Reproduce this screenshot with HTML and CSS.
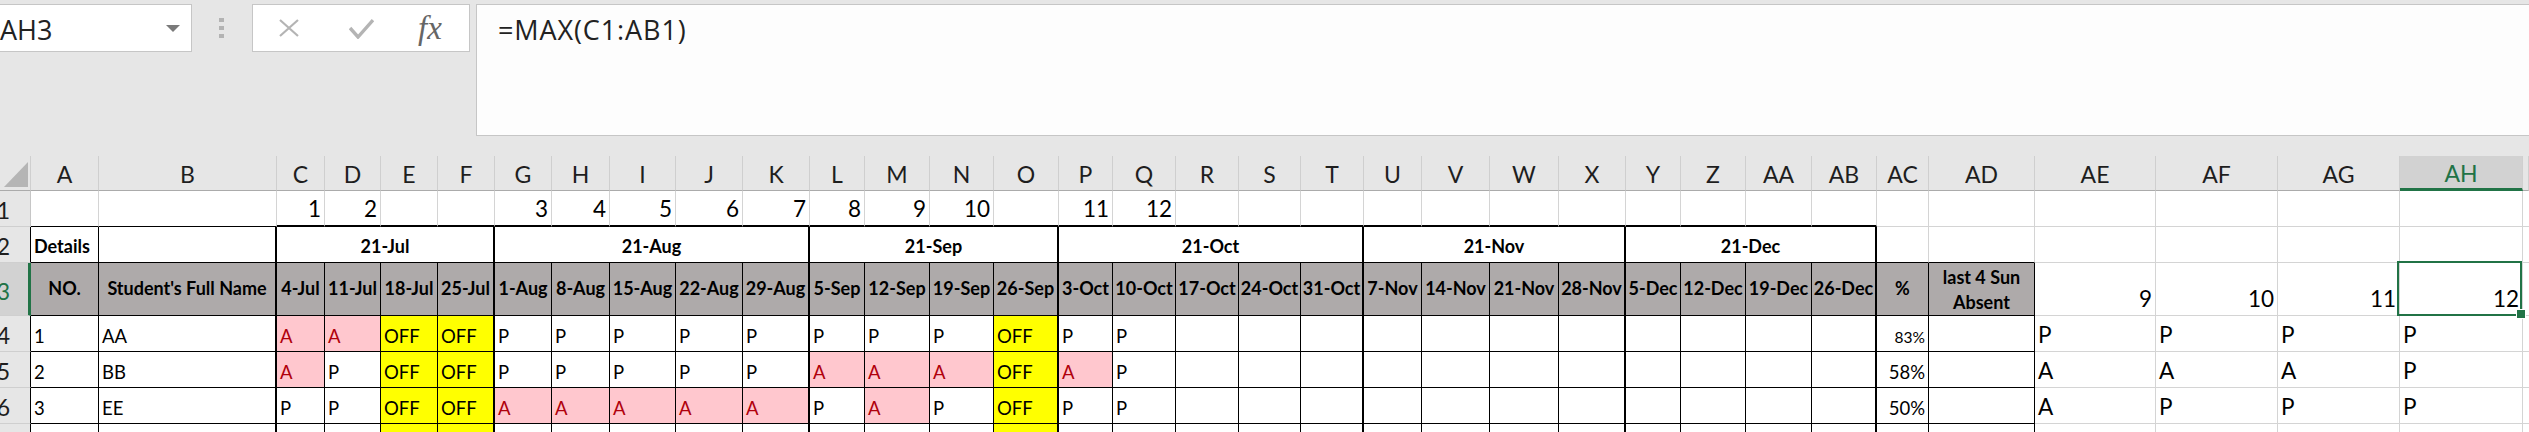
FILE: index.html
```html
<!DOCTYPE html>
<html lang="en">
<head>
<meta charset="utf-8">
<title>Attendance sheet</title>
<link rel="stylesheet" href="styles.css">
</head>
<body>
<div class="fbar">
  <div class="namebox"><span class="nbtext">AH3</span><svg class="dd" width="14" height="7" viewBox="0 0 14 7"><path d="M0 0H14L7 7Z" fill="#7a7a7a"/></svg></div>
  <div class="grip"><i></i><i></i><i></i></div>
  <div class="fnbox">
    <svg class="ico-x" width="22" height="18" viewBox="0 0 22 18"><path d="M2 1L20 17M20 1L2 17" stroke="#b4b4b4" stroke-width="2.2" fill="none"/></svg>
    <svg class="ico-ok" width="25" height="21" viewBox="0 0 25 21"><path d="M1 10L9 19L24 2" stroke="#b4b4b4" stroke-width="3.4" fill="none"/></svg>
    <span class="fx">fx</span>
  </div>
  <div class="formula">=MAX(C1:AB1)</div>
</div>

<div class="sheet">
  <!-- column headers -->
  <div class="ch corner"><svg width="24" height="25" viewBox="0 0 24 25"><path d="M0 25H24V0Z" fill="#b5b5b5"/></svg></div>
  <div class="ch">A</div><div class="ch">B</div><div class="ch">C</div><div class="ch">D</div><div class="ch">E</div><div class="ch">F</div><div class="ch">G</div><div class="ch">H</div><div class="ch">I</div><div class="ch">J</div><div class="ch">K</div><div class="ch">L</div><div class="ch">M</div><div class="ch">N</div><div class="ch">O</div><div class="ch">P</div><div class="ch">Q</div><div class="ch">R</div><div class="ch">S</div><div class="ch">T</div><div class="ch">U</div><div class="ch">V</div><div class="ch">W</div><div class="ch">X</div><div class="ch">Y</div><div class="ch">Z</div><div class="ch">AA</div><div class="ch">AB</div><div class="ch">AC</div><div class="ch">AD</div><div class="ch">AE</div><div class="ch">AF</div><div class="ch">AG</div><div class="ch sel">AH</div><div class="ch"></div>

  <!-- row 1 -->
  <div class="rh">1</div>
  <div class="c kb"></div><div class="c kb"></div>
  <div class="c kb2 big r">1</div><div class="c kb2 big r">2</div><div class="c kb2"></div><div class="c kb2"></div>
  <div class="c kb2 big r">3</div><div class="c kb2 big r">4</div><div class="c kb2 big r">5</div><div class="c kb2 big r">6</div><div class="c kb2 big r">7</div>
  <div class="c kb2 big r">8</div><div class="c kb2 big r">9</div><div class="c kb2 big r">10</div><div class="c kb2"></div>
  <div class="c kb2 big r">11</div><div class="c kb2 big r">12</div><div class="c kb2"></div><div class="c kb2"></div><div class="c kb2"></div>
  <div class="c kb2"></div><div class="c kb2"></div><div class="c kb2"></div><div class="c kb2"></div>
  <div class="c kb2"></div><div class="c kb2"></div><div class="c kb2"></div><div class="c kb2"></div>
  <div class="c"></div><div class="c"></div><div class="c"></div><div class="c"></div><div class="c"></div><div class="c"></div><div class="c"></div>

  <!-- row 2 -->
  <div class="rh k">2</div>
  <div class="c t b">Details</div>
  <div class="c t e"></div>
  <div class="c t e b ctr sp4">21-Jul</div>
  <div class="c t e b ctr sp5">21-Aug</div>
  <div class="c t e b ctr sp4">21-Sep</div>
  <div class="c t e b ctr sp5">21-Oct</div>
  <div class="c t e b ctr sp4">21-Nov</div>
  <div class="c t e b ctr sp4">21-Dec</div>
  <div class="c kb"></div><div class="c kb"></div>
  <div class="c"></div><div class="c"></div><div class="c"></div><div class="c"></div><div class="c"></div>

  <!-- row 3 -->
  <div class="rh sel">3</div>
  <div class="c t g">NO.</div>
  <div class="c t e g">Student's Full Name</div>
  <div class="c t g">4-Jul</div><div class="c t g">11-Jul</div><div class="c t g">18-Jul</div><div class="c t e g">25-Jul</div>
  <div class="c t g">1-Aug</div><div class="c t g">8-Aug</div><div class="c t g">15-Aug</div><div class="c t g">22-Aug</div><div class="c t e g">29-Aug</div>
  <div class="c t g">5-Sep</div><div class="c t g">12-Sep</div><div class="c t g">19-Sep</div><div class="c t e g">26-Sep</div>
  <div class="c t g">3-Oct</div><div class="c t g">10-Oct</div><div class="c t g">17-Oct</div><div class="c t g">24-Oct</div><div class="c t e g">31-Oct</div>
  <div class="c t g">7-Nov</div><div class="c t g">14-Nov</div><div class="c t g">21-Nov</div><div class="c t e g">28-Nov</div>
  <div class="c t g">5-Dec</div><div class="c t g">12-Dec</div><div class="c t g">19-Dec</div><div class="c t e g">26-Dec</div>
  <div class="c t g">%</div>
  <div class="c t g two">last 4 Sun<br>Absent</div>
  <div class="c big r">9</div><div class="c big r">10</div><div class="c big r">11</div><div class="c big r selcell">12</div>
  <div class="c"></div>

  <!-- row 4 -->
  <div class="rh k">4</div>
  <div class="c t">1</div>
  <div class="c t e">AA</div>
  <div class="c t pk">A</div><div class="c t pk">A</div><div class="c t yl">OFF</div><div class="c t e yl">OFF</div>
  <div class="c t">P</div><div class="c t">P</div><div class="c t">P</div><div class="c t">P</div><div class="c t e">P</div>
  <div class="c t">P</div><div class="c t">P</div><div class="c t">P</div><div class="c t e yl">OFF</div>
  <div class="c t">P</div><div class="c t">P</div><div class="c t"></div><div class="c t"></div><div class="c t e"></div>
  <div class="c t"></div><div class="c t"></div><div class="c t"></div><div class="c t e"></div>
  <div class="c t"></div><div class="c t"></div><div class="c t"></div><div class="c t e"></div>
  <div class="c t r sm">83%</div>
  <div class="c t"></div>
  <div class="c big">P</div><div class="c big">P</div><div class="c big">P</div><div class="c big">P</div>
  <div class="c"></div>

  <!-- row 5 -->
  <div class="rh k">5</div>
  <div class="c t">2</div>
  <div class="c t e">BB</div>
  <div class="c t pk">A</div><div class="c t">P</div><div class="c t yl">OFF</div><div class="c t e yl">OFF</div>
  <div class="c t">P</div><div class="c t">P</div><div class="c t">P</div><div class="c t">P</div><div class="c t e">P</div>
  <div class="c t pk">A</div><div class="c t pk">A</div><div class="c t pk">A</div><div class="c t e yl">OFF</div>
  <div class="c t pk">A</div><div class="c t">P</div><div class="c t"></div><div class="c t"></div><div class="c t e"></div>
  <div class="c t"></div><div class="c t"></div><div class="c t"></div><div class="c t e"></div>
  <div class="c t"></div><div class="c t"></div><div class="c t"></div><div class="c t e"></div>
  <div class="c t r">58%</div>
  <div class="c t"></div>
  <div class="c big">A</div><div class="c big">A</div><div class="c big">A</div><div class="c big">P</div>
  <div class="c"></div>

  <!-- row 6 -->
  <div class="rh k">6</div>
  <div class="c t">3</div>
  <div class="c t e">EE</div>
  <div class="c t">P</div><div class="c t">P</div><div class="c t yl">OFF</div><div class="c t e yl">OFF</div>
  <div class="c t pk">A</div><div class="c t pk">A</div><div class="c t pk">A</div><div class="c t pk">A</div><div class="c t e pk">A</div>
  <div class="c t">P</div><div class="c t pk">A</div><div class="c t">P</div><div class="c t e yl">OFF</div>
  <div class="c t">P</div><div class="c t">P</div><div class="c t"></div><div class="c t"></div><div class="c t e"></div>
  <div class="c t"></div><div class="c t"></div><div class="c t"></div><div class="c t e"></div>
  <div class="c t"></div><div class="c t"></div><div class="c t"></div><div class="c t e"></div>
  <div class="c t r">50%</div>
  <div class="c t"></div>
  <div class="c big">A</div><div class="c big">P</div><div class="c big">P</div><div class="c big">P</div>
  <div class="c"></div>

  <!-- row 7 -->
  <div class="rh k">7</div>
  <div class="c t"></div>
  <div class="c t e"></div>
  <div class="c t"></div><div class="c t"></div><div class="c t yl"></div><div class="c t e yl"></div>
  <div class="c t"></div><div class="c t"></div><div class="c t"></div><div class="c t"></div><div class="c t e"></div>
  <div class="c t"></div><div class="c t"></div><div class="c t"></div><div class="c t e yl"></div>
  <div class="c t"></div><div class="c t"></div><div class="c t"></div><div class="c t"></div><div class="c t e"></div>
  <div class="c t"></div><div class="c t"></div><div class="c t"></div><div class="c t e"></div>
  <div class="c t"></div><div class="c t"></div><div class="c t"></div><div class="c t e"></div>
  <div class="c t"></div>
  <div class="c t"></div>
  <div class="c"></div><div class="c"></div><div class="c"></div><div class="c"></div>
  <div class="c"></div>
</div>
</body>
</html>
```
FILE: styles.css
```css
* { box-sizing: border-box; }
html, body { margin: 0; padding: 0; }
body {
  background: #e6e6e6;
  width: 2529px;
  height: 432px;
  overflow: hidden;
  font-family: "Lato", "Liberation Sans", sans-serif;
  color: #000;
}

/* ---------- formula bar ---------- */
.fbar {
  display: flex;
  align-items: flex-start;
  height: 156px;
  padding-top: 4px;
}
.namebox {
  flex: none;
  margin-left: -10px;
  width: 202px;
  height: 48px;
  background: #fff;
  border: 1px solid #c6c6c6;
  display: flex;
  align-items: center;
  padding: 3px 11px 0 9px;
  font-family: "Open Sans", sans-serif;
  font-size: 27px;
  color: #222;
}
.namebox .dd { margin-left: auto; margin-top: -3px; }
.grip {
  flex: none;
  margin-left: 27px;
  margin-top: 14px;
  display: flex;
  flex-direction: column;
  gap: 4px;
}
.grip i { display: block; width: 5px; height: 4px; background: #b3b3b3; }
.fnbox {
  flex: none;
  margin-left: 28px;
  width: 218px;
  height: 48px;
  background: #fff;
  border: 1px solid #c6c6c6;
  display: flex;
  align-items: center;
}
.ico-x { margin-left: 25px; }
.ico-ok { margin-left: 49px; }
.fx {
  margin-left: 44px;
  font-family: "Liberation Serif", serif;
  font-style: italic;
  font-size: 33px;
  color: #666;
  line-height: 1;
}
.formula {
  flex: 1;
  margin-left: 6px;
  margin-right: -2px;
  height: 132px;
  background: #fdfdfd;
  border: 1px solid #c6c6c6;
  padding: 7px 0 0 21px;
  font-family: "Open Sans", sans-serif;
  font-size: 27px;
  letter-spacing: 0.9px;
  line-height: 36px;
  color: #222;
}

/* ---------- sheet grid ---------- */
.sheet {
  display: grid;
  grid-template-columns:
    31px 68px 178px
    48px 56px 57px 57px
    57px 58px 66px 67px 67px
    55px 65px 64px 65px
    54px 63px 63px 62px 63px
    58px 68px 69px 67px
    55px 65px 66px 65px
    52px 106px 121px 122px 122px 123px 6px;
  grid-template-rows: 35px 36px 36px 53px 36px 36px 36px 36px;
}

.ch {
  background: #e6e6e6;
  border-right: 1px solid #cfcfcf;
  border-bottom: 1px solid #ababab;
  display: flex;
  align-items: center;
  justify-content: center;
  padding-top: 2px;
  font-size: 23px;
  color: #1e1e1e;
}
.ch.sel {
  background: #d2d2d2;
  color: #217346;
  border-bottom: 3px solid #217346;
}
.corner {
  justify-content: flex-end;
  align-items: flex-end;
  padding: 0 2px 3px 0;
}

.rh {
  background: #e6e6e6;
  border-right: 1px solid #c6c6c6;
  border-bottom: 1px solid #cfcfcf;
  display: flex;
  align-items: center;
  justify-content: flex-end;
  padding: 3px 20px 0 0;
  font-size: 23px;
  color: #1e1e1e;
  overflow: hidden;
}
.rh.k { border-right-color: #000; }
.rh.sel {
  background: #d2d2d2;
  color: #217346;
  border-right: 3px solid #217346;
  padding-right: 18px;
}

.c {
  background: #fff;
  border-right: 1px solid #d4d4d4;
  border-bottom: 1px solid #d4d4d4;
  display: flex;
  align-items: flex-end;
  padding: 0 3px 4px;
  font-size: 18.5px;
  line-height: 1.2;
  white-space: nowrap;
  overflow: hidden;
}
.r { justify-content: flex-end; }
.ctr { justify-content: center; }
.t { border-right-color: #000; border-bottom-color: #000; }
.e { border-right-width: 2px; }
.kb { border-bottom-color: #000; }
.kb2 { border-bottom: 2px solid #000; }
.b { font-weight: 700; font-size: 18px; }
.g {
  background: #aeaaaa;
  font-weight: 700;
  font-size: 18px;
  justify-content: center;
  align-items: center;
  text-align: center;
  padding: 0 1px;
}
.two { line-height: 25px; padding-top: 2px; }
.sp4 { grid-column: span 4; }
.sp5 { grid-column: span 5; }
.pk { background: #ffc7ce; color: #b0000c; }
.yl { background: #ffff00; }
.big { font-size: 22.5px; padding-bottom: 3px; }
.sm { font-size: 15.5px; }

.selcell { position: relative; overflow: visible; }
.selcell::before {
  content: "";
  position: absolute;
  left: -3px;
  top: -2px;
  right: 0;
  bottom: -1px;
  border: 2px solid #217346;
}
.selcell::after {
  content: "";
  position: absolute;
  right: -4px;
  bottom: -4px;
  width: 8px;
  height: 8px;
  background: #217346;
  border: 1px solid #fff;
}
```
